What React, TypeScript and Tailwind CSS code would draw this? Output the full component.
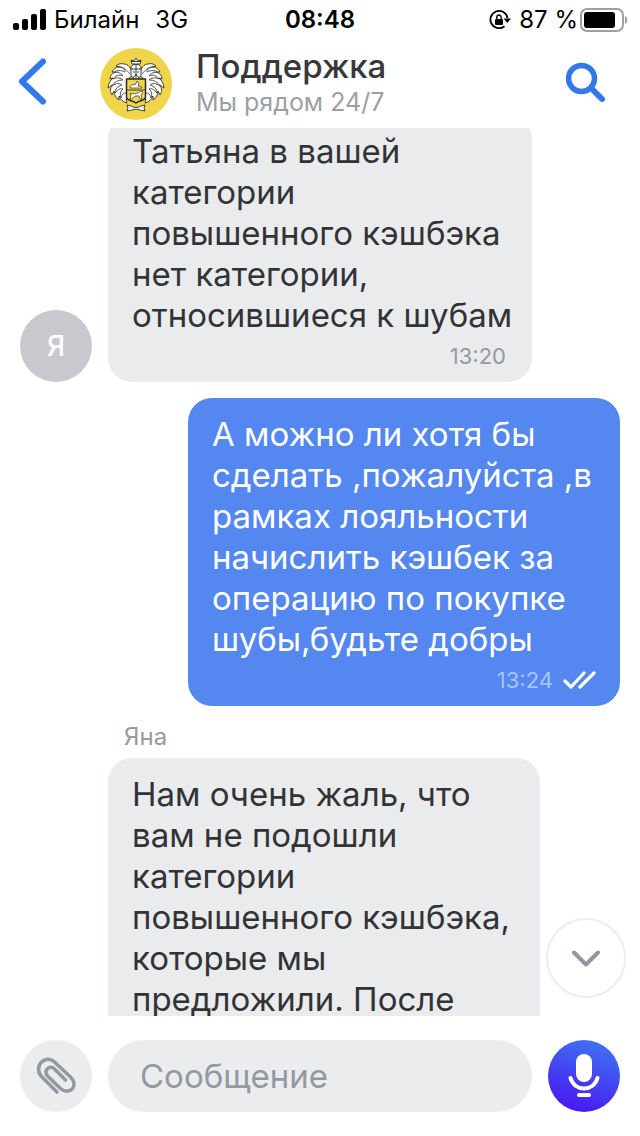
interface MessageInterface {
  author?: string;
  initial?: string;
  text: string;
  time?: string;
  own?: boolean;
}

const messages: MessageInterface[] = [
  {
    initial: "Я",
    text: "Татьяна в вашей\nкатегории\nповышенного кэшбэка\nнет категории,\nотносившиеся к шубам",
    time: "13:20",
  },
  {
    text: "А можно ли хотя бы\nсделать ,пожалуйста ,в\nрамках лояльности\nначислить кэшбек за\nоперацию по покупке\nшубы,будьте добры",
    time: "13:24",
    own: true,
  },
  {
    author: "Яна",
    text: "Нам очень жаль, что\nвам не подошли\nкатегории\nповышенного кэшбэка,\nкоторые мы\nпредложили. После",
  },
];

const StatusBar = () => (
  <div className="grid h-10 shrink-0 grid-cols-[1fr_auto_1fr] items-center px-3 text-2xl text-black">
    <div className="flex items-center">
      <svg width="34" height="22" viewBox="0 0 34 22">
        <rect x="1" y="14" width="6" height="7" rx="2" />
        <rect x="10" y="10" width="6" height="11" rx="2" />
        <rect x="19" y="5" width="6" height="16" rx="2" />
        <rect x="28" y="0" width="6" height="21" rx="2" />
      </svg>
      <span className="ml-2">Билайн</span>
      <span className="ml-4">3G</span>
    </div>
    <span className="font-semibold">08:48</span>
    <div className="flex items-center justify-end">
      <svg className="shrink-0" width="22" height="20" viewBox="0 0 22 20" fill="none">
        <path d="M15.5 16.2A8.6 8.6 0 1 1 18.5 8" stroke="black" strokeWidth="1.8" />
        <path d="M14.5 8.5h7.5l-3.8 4.5z" fill="black" />
        <rect x="6" y="9" width="8" height="6" rx="1" fill="black" />
        <path d="M7.800 9V7.200a2.200 2.200 0 0 1 4.400 0V9" stroke="black" strokeWidth="1.400" />
      </svg>
      <span className="ml-2 whitespace-nowrap">87 %</span>
      <svg className="ml-0.5 shrink-0" width="48" height="24" viewBox="0 0 48 24">
        <rect x="1" y="1" width="42" height="22" rx="6" fill="none" stroke="#a0a0a0" strokeWidth="2" />
        <rect x="4" y="4" width="31" height="16" rx="3" />
        <path d="M45 8c3 1 3 7 0 8z" fill="#a0a0a0" />
      </svg>
    </div>
  </div>
);

// Left half of the crest's mantle, mirrored for the right half
const Mantle = () => (
  <>
    <path d="M32 25c-1-5-4-9-8-9-3-1-6 0-8 2l4 1c-3 0-6 1-8 5l4 0c-4 1-6 4-6 7l3-1c-3 3-5 6-5 10l4-3c-2 4-2 7 0 10l2-4c0 4 2 7 5 9l0-4c2 4 4 6 8 7l-1-4 3 1V30l3-2z" />
    <path
      d="M30 26c-4-5-7-7-10-7 4 1 5 3 5 5-4-2-8-2-10 0 4 0 7 2 8 4-4-2-8 0-10 3 4-2 8-1 10 1-5 0-9 2-11 6 4-3 8-3 10-1-4 1-7 4-7 8 3-4 6-5 8-4-3 2-3 6-2 9 1-4 3-5 5-5"
      fill="none"
      strokeWidth="0.8"
    />
  </>
);

const Crest = () => (
  <svg className="size-[72px] shrink-0" viewBox="0 0 72 72">
    <circle cx="36" cy="36" r="36" fill="#f0d54b" />
    <g fill="white" stroke="#2b2b2b" strokeWidth="0.9" strokeLinejoin="round">
      <Mantle />
      <g transform="matrix(-1 0 0 1 72 0)">
        <Mantle />
      </g>
      <path d="M31 28v-8c0-5 10-5 10 0v8l-5 4z" />
      <path d="M31 21h10M36 17v13M33 24h2m2 0h2M33 30l3-4 3 4" fill="none" />
      <path d="M32 16l-1-4 3 1 2-3 2 3 3-1-1 4z" />
      <path d="M31 13.500h10" fill="none" />
      <path d="M26.500 31h19v18c0 4-6 3-9.500 6-3.500-3-9.500-2-9.500-6z" fill="#f0d54b" strokeWidth="1.500" />
      <path d="M26.500 42h19" />
      <path
        d="M30 40c0-3 3-4 5-3l2-4 2 2-1 3c3 0 4 1 4 2zM30 45c3 2 6 0 8 0l3-2 2 1-2 3 1 4h-2l-1-3h-4l-3 3h-2l1-3z"
        strokeWidth="0.7"
      />
      <path d="M27 57l4 1c3 2 7 2 10 0l4-1-1 3 1 3-5-1c-3-1-5-1-8 0l-5 1 1-3z" />
    </g>
  </svg>
);

const Header = () => (
  <header className="flex h-22 shrink-0 items-start pr-[33px] pl-4">
    <button aria-label="Назад" className="mt-4 shrink-0">
      <svg width="34" height="50" viewBox="0 0 34 50" fill="none">
        <path
          d="M27 5.500 6 25.500l21 20"
          stroke="#3479ec"
          strokeWidth="6"
          strokeLinecap="round"
          strokeLinejoin="round"
        />
      </svg>
    </button>
    <div className="mt-2 ml-[50px]">
      <Crest />
    </div>
    <div className="mt-1 ml-6 grow">
      <h1 className="text-[33px] leading-11 font-medium text-[#38383a]">Поддержка</h1>
      <p className="text-[25px] leading-7 text-[#9b9fa6]">Мы рядом 24/7</p>
    </div>
    <button aria-label="Поиск" className="mt-[22px] shrink-0">
      <svg width="42" height="42" viewBox="0 0 42 42" fill="none">
        <circle cx="16.500" cy="16.500" r="13" stroke="#3479ec" strokeWidth="5.500" />
        <path d="M26.500 26.500 37 37" stroke="#3479ec" strokeWidth="6" strokeLinecap="round" />
      </svg>
    </button>
  </header>
);

const Message = ({ author, initial, text, time, own }: MessageInterface) => (
  <li className={own ? "flex justify-end" : "flex items-end gap-4"}>
    {!own && (
      <div className="w-[72px] shrink-0">
        {initial && (
          <div className="flex h-[72px] items-center justify-center rounded-full bg-[#c8c9cf] text-[28px] font-medium text-white">
            {initial}
          </div>
        )}
      </div>
    )}
    <div className={initial ? "w-full max-w-[424px]" : "w-full max-w-[432px]"}>
      {author && <p className="pb-1.5 pl-4 text-2xl leading-[30px] text-[#99999e]">{author}</p>}
      <div
        className={
          own
            ? "rounded-3xl bg-[#5487f0] px-6 pt-4 pb-3.5 text-white"
            : "rounded-3xl bg-[#e9ebed] px-6 pt-4 pb-3.5 text-[#333336]"
        }
      >
        <p className="text-[33px] leading-[41px] whitespace-pre">{text}</p>
        <div className="mt-2 flex h-6 items-center justify-end gap-2.5 text-[22px]">
          {time && <time className={own ? "text-[#a8c3f8]" : "pr-0.5 text-[#96999f]"}>{time}</time>}
          {own && (
            <svg width="33" height="18" viewBox="0 0 33 18" fill="none">
              <path
                d="m2 10 6 6L21 2M17 16 31 2"
                stroke="white"
                strokeWidth="3.200"
                strokeLinecap="round"
                strokeLinejoin="round"
              />
            </svg>
          )}
        </div>
      </div>
    </div>
  </li>
);

const Composer = () => (
  <form className="flex h-[120px] shrink-0 items-center gap-4 px-5">
    <button
      type="button"
      aria-label="Прикрепить файл"
      className="flex size-[72px] shrink-0 items-center justify-center rounded-full bg-[#ebecee]"
    >
      <svg width="42" height="42" viewBox="0 0 42 42" fill="none">
        <path
          d="M22 37 6.500 21.500C-2 12 9.500-1.500 19.500 7L35.500 22c9 9-1.500 19-10 11.500L12.500 21c-4.500-5.500 2-11.500 7-7L30.500 25"
          stroke="#9498a2"
          strokeWidth="3.600"
          strokeLinecap="round"
          strokeLinejoin="round"
        />
      </svg>
    </button>
    <input
      type="text"
      aria-label="Сообщение"
      placeholder="Сообщение"
      className="h-[72px] min-w-0 grow rounded-full bg-[#ebecee] px-8 text-[33px] text-[#333336] outline-none placeholder:text-[#9498a2]"
    />
    <button
      type="button"
      aria-label="Голосовое сообщение"
      className="flex size-[72px] shrink-0 items-center justify-center rounded-full bg-linear-[20deg] from-[#4a0cf2] to-[#3d7df2]"
    >
      <svg width="32" height="44" viewBox="0 0 32 44" fill="none">
        <rect x="8" y="0" width="16" height="28" rx="8" fill="white" />
        <path d="M2.500 24c4 14 23 14 27 0" stroke="white" strokeWidth="4" strokeLinecap="round" />
        <path d="M11 41h10" stroke="white" strokeWidth="4" strokeLinecap="round" />
      </svg>
    </button>
  </form>
);

export default function App() {
  return (
    <div className="flex h-screen flex-col bg-white font-['Inter','Liberation_Sans',sans-serif]">
      <StatusBar />
      <Header />
      <main className="relative min-h-0 flex-1 overflow-hidden">
        <ul className="-mt-[13px] flex flex-col gap-4 px-5">
          {messages.map((message) => (
            <Message key={message.text} {...message} />
          ))}
        </ul>
        <button
          aria-label="Вниз"
          className="absolute right-3.5 bottom-[18px] flex size-20 items-center justify-center rounded-full border-2 border-[#ededee] bg-white"
        >
          <svg width="30" height="18" viewBox="0 0 30 18" fill="none">
            <path
              d="m3 3.500 12 12 12-12"
              stroke="#93969f"
              strokeWidth="4"
              strokeLinecap="round"
              strokeLinejoin="round"
            />
          </svg>
        </button>
      </main>
      <Composer />
    </div>
  );
}
